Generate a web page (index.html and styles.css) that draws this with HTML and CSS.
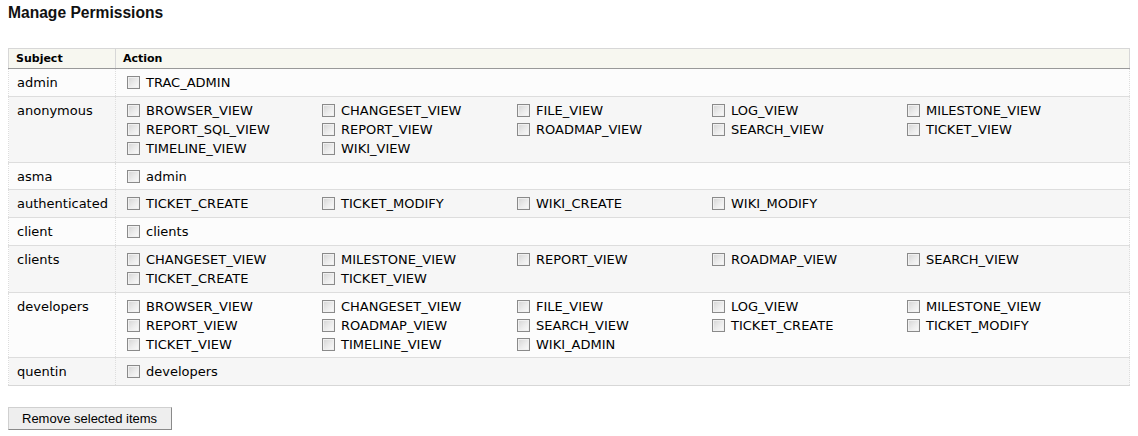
FILE: index.html
```html
<!DOCTYPE html>
<html>
<head>
<meta charset="utf-8">
<link rel="stylesheet" href="styles.css">
</head>
<body>
<h2 class="title">Manage Permissions</h2>
<form class="perm-form">
<table class="listing">
  <colgroup><col class="c-subject"><col class="c-action"></colgroup>
  <thead>
    <tr><th>Subject</th><th>Action</th></tr>
  </thead>
  <tbody>
    <tr class="even"><td class="subject">admin</td><td class="actions"><div class="grid">
      <label class="perm"><input type="checkbox"><span>TRAC_ADMIN</span></label>
    </div></td></tr>
    <tr class="odd"><td class="subject">anonymous</td><td class="actions"><div class="grid">
      <label class="perm"><input type="checkbox"><span>BROWSER_VIEW</span></label>
      <label class="perm"><input type="checkbox"><span>CHANGESET_VIEW</span></label>
      <label class="perm"><input type="checkbox"><span>FILE_VIEW</span></label>
      <label class="perm"><input type="checkbox"><span>LOG_VIEW</span></label>
      <label class="perm"><input type="checkbox"><span>MILESTONE_VIEW</span></label>
      <label class="perm"><input type="checkbox"><span>REPORT_SQL_VIEW</span></label>
      <label class="perm"><input type="checkbox"><span>REPORT_VIEW</span></label>
      <label class="perm"><input type="checkbox"><span>ROADMAP_VIEW</span></label>
      <label class="perm"><input type="checkbox"><span>SEARCH_VIEW</span></label>
      <label class="perm"><input type="checkbox"><span>TICKET_VIEW</span></label>
      <label class="perm"><input type="checkbox"><span>TIMELINE_VIEW</span></label>
      <label class="perm"><input type="checkbox"><span>WIKI_VIEW</span></label>
    </div></td></tr>
    <tr class="even"><td class="subject">asma</td><td class="actions"><div class="grid">
      <label class="perm"><input type="checkbox"><span>admin</span></label>
    </div></td></tr>
    <tr class="odd"><td class="subject">authenticated</td><td class="actions"><div class="grid">
      <label class="perm"><input type="checkbox"><span>TICKET_CREATE</span></label>
      <label class="perm"><input type="checkbox"><span>TICKET_MODIFY</span></label>
      <label class="perm"><input type="checkbox"><span>WIKI_CREATE</span></label>
      <label class="perm"><input type="checkbox"><span>WIKI_MODIFY</span></label>
    </div></td></tr>
    <tr class="even"><td class="subject">client</td><td class="actions"><div class="grid">
      <label class="perm"><input type="checkbox"><span>clients</span></label>
    </div></td></tr>
    <tr class="odd"><td class="subject">clients</td><td class="actions"><div class="grid">
      <label class="perm"><input type="checkbox"><span>CHANGESET_VIEW</span></label>
      <label class="perm"><input type="checkbox"><span>MILESTONE_VIEW</span></label>
      <label class="perm"><input type="checkbox"><span>REPORT_VIEW</span></label>
      <label class="perm"><input type="checkbox"><span>ROADMAP_VIEW</span></label>
      <label class="perm"><input type="checkbox"><span>SEARCH_VIEW</span></label>
      <label class="perm"><input type="checkbox"><span>TICKET_CREATE</span></label>
      <label class="perm"><input type="checkbox"><span>TICKET_VIEW</span></label>
    </div></td></tr>
    <tr class="even"><td class="subject">developers</td><td class="actions"><div class="grid">
      <label class="perm"><input type="checkbox"><span>BROWSER_VIEW</span></label>
      <label class="perm"><input type="checkbox"><span>CHANGESET_VIEW</span></label>
      <label class="perm"><input type="checkbox"><span>FILE_VIEW</span></label>
      <label class="perm"><input type="checkbox"><span>LOG_VIEW</span></label>
      <label class="perm"><input type="checkbox"><span>MILESTONE_VIEW</span></label>
      <label class="perm"><input type="checkbox"><span>REPORT_VIEW</span></label>
      <label class="perm"><input type="checkbox"><span>ROADMAP_VIEW</span></label>
      <label class="perm"><input type="checkbox"><span>SEARCH_VIEW</span></label>
      <label class="perm"><input type="checkbox"><span>TICKET_CREATE</span></label>
      <label class="perm"><input type="checkbox"><span>TICKET_MODIFY</span></label>
      <label class="perm"><input type="checkbox"><span>TICKET_VIEW</span></label>
      <label class="perm"><input type="checkbox"><span>TIMELINE_VIEW</span></label>
      <label class="perm"><input type="checkbox"><span>WIKI_ADMIN</span></label>
    </div></td></tr>
    <tr class="odd"><td class="subject">quentin</td><td class="actions"><div class="grid">
      <label class="perm"><input type="checkbox"><span>developers</span></label>
    </div></td></tr>
  </tbody>
</table>
<div class="buttons">
  <button type="button" class="btn">Remove selected items</button>
</div>
</form>
</body>
</html>
```

FILE: styles.css
```css
html, body {
  margin: 0;
  padding: 0;
  background: #fff;
}
body {
  padding: 0 8px;
  font: normal 13px "DejaVu Sans", Verdana, sans-serif;
  color: #000;
}
.title {
  margin: 0;
  padding-top: 3px;
  font: bold 15.6px/19px "Liberation Sans", Arial, sans-serif;
  color: #111;
}
.perm-form {
  margin: 26px 0 0;
}
.listing {
  width: 100%;
  table-layout: fixed;
  border-collapse: collapse;
  border-spacing: 0;
  border-bottom: 1px solid #d7d7d7;
}
.c-subject {
  width: 107px;
}
.listing thead tr {
  background: #f7f7f0;
}
.listing th {
  text-align: left;
  border: 1px solid #d7d7d7;
  border-bottom-color: #999;
  font-size: 11px;
  font-weight: bold;
  line-height: 15px;
  padding: 2px 7px;
  white-space: nowrap;
}
.listing tbody tr {
  border-top: 1px solid #ddd;
}
.listing tbody tr.even {
  background: #fcfcfc;
}
.listing tbody tr.odd {
  background: #f6f6f6;
}
.listing td {
  border-left: 1px dotted #ddd;
  border-right: 1px dotted #ddd;
  vertical-align: top;
  padding: 4px 8px 3.75px 8px;
  line-height: 19px;
}
.subject {
  white-space: nowrap;
}
.grid {
  display: grid;
  grid-template-columns: repeat(5, 195px);
}
.perm {
  display: flex;
  align-items: center;
  height: 19px;
  white-space: nowrap;
}
.perm input {
  -webkit-appearance: none;
  appearance: none;
  box-sizing: border-box;
  width: 13px;
  height: 13px;
  margin: 0 6px 0 3px;
  border: 1px solid #8a8a8a;
  background: linear-gradient(135deg, #d4d4d4 0%, #ececec 55%, #fbfbfb 100%);
  box-shadow: inset 0 0 0 1px #f0f0f0;
  flex: none;
}
.buttons {
  margin-top: 21px;
}
.btn {
  height: 23px;
  padding: 0 14px 0 13px;
  font: normal 13px "Liberation Sans", Arial, sans-serif;
  color: #000;
  background: #eeeeee;
  border: 1px solid #d0d0d0;
  border-right-color: #8a8a8a;
  border-bottom-color: #8a8a8a;
  border-radius: 0;
}
```
